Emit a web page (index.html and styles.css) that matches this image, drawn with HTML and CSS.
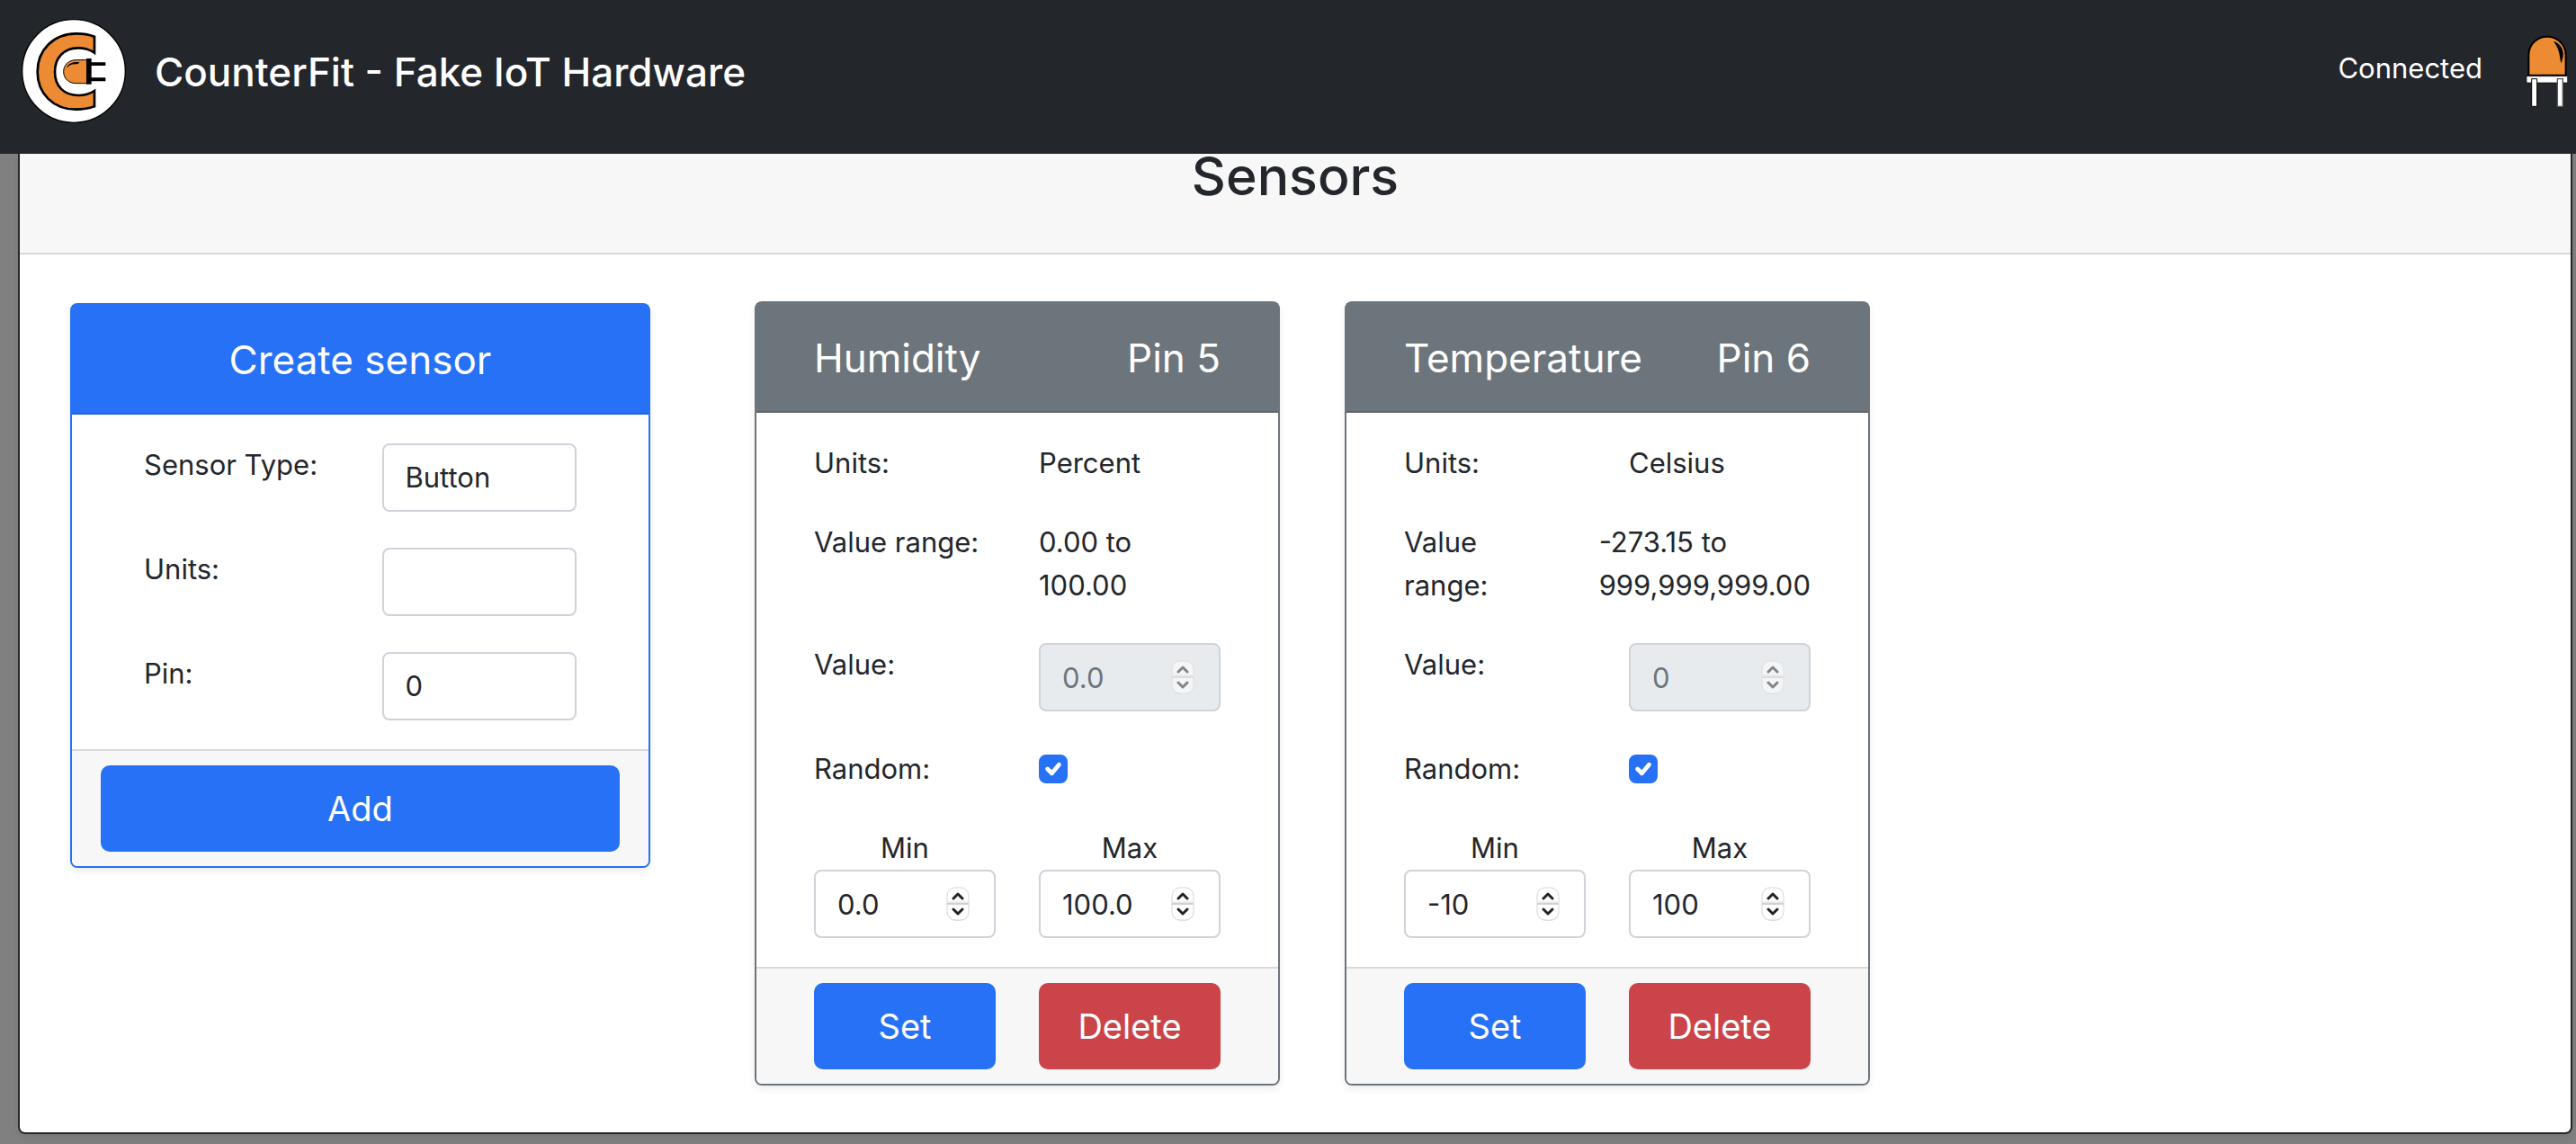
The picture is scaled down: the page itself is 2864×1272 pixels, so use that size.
FILE: index.html
```html
<!DOCTYPE html>
<html lang="en">
<head>
<meta charset="utf-8">
<title>CounterFit</title>
<link rel="stylesheet" href="styles.css">
</head>
<body>
<svg width="0" height="0" class="sprite" aria-hidden="true">
  <symbol id="stepper" viewBox="0 0 28 40">
    <rect x="2" y="3" width="24" height="36" rx="9" fill="#000" opacity=".08"/>
    <rect x="2" y="2" width="24" height="36" rx="9" fill="#fff" stroke="#d6d6d6"/>
    <path d="M3 17H25V21H3Z" fill="#ececec"/>
    <path d="M2 20H26" stroke="#d0d0d0" stroke-width="2"/>
    <path d="M9 14L14 9L19 14M9 26L14 31L19 26" fill="none" stroke="#222" stroke-width="3" stroke-linecap="round" stroke-linejoin="round"/>
  </symbol>
</svg>

<header class="navbar">
  <svg class="logo" viewBox="24 26 348 348" role="img" aria-label="CounterFit logo">
    <circle cx="198" cy="200" r="172" fill="#fff" stroke="#000" stroke-width="4"/>
    <path d="M267 85Q240 75 207 75C130 75 77 130 77 203C77 275 130 328 205 328Q240 328 267 318V266Q245 281 213 281C165 281 135 250 135 203C135 156 165 123 212 123Q245 123 267 139Z" fill="#ec8b33" stroke="#000" stroke-width="8"/>
    <path d="M242 163H207C180 163 164 180 164 202C164 224 180 241 207 241H242Z" fill="#ec8b33" stroke="#000" stroke-width="3"/>
    <path d="M174 190C180 175 195 168 217 171C215 176 210 177 202 177C190 177 183 181 174 190Z"/>
    <path d="M240 158H257V171H304V182H257V222H304V234H257V244H240Z"/>
  </svg>
  <h1 class="brand">CounterFit - Fake IoT Hardware</h1>
  <span class="status">Connected</span>
  <svg class="led" viewBox="54 26 144 240" role="img" aria-label="LED on">
    <path d="M64 160V93C64 55 95 31 126 31C157 31 188 55 188 93V160Z" fill="#ec8b33" stroke="#000" stroke-width="6"/>
    <path d="M147 47C166 50 183 74 179 97L173 120C166 102 171 78 147 47Z"/>
    <path d="M57 163H194V185H57Z" fill="#fff" stroke="#000" stroke-width="2"/>
    <path d="M74 172H92V264H74Z" fill="#fff" stroke="#000" stroke-width="3"/>
    <path d="M160 172H178V264H160Z" fill="#fff" stroke="#555" stroke-width="4"/>
  </svg>
</header>

<main class="panel">
  <h2 class="panel-title">Sensors</h2>
  <div class="panel-body">
    <form class="card card-create">
      <h3 class="card-header">Create sensor</h3>
      <div class="card-body">
        <div class="row">
          <label for="type">Sensor Type:</label>
          <select id="type" class="control"><option>Button</option></select>
        </div>
        <div class="row">
          <label for="units">Units:</label>
          <input id="units" class="control" type="text">
        </div>
        <div class="row">
          <label for="pin">Pin:</label>
          <select id="pin" class="control"><option>0</option></select>
        </div>
      </div>
      <div class="card-footer"><button type="button" class="btn btn-primary">Add</button></div>
    </form>

    <div class="sensors">
      <form class="card">
        <h3 class="card-header"><span>Humidity</span><span>Pin 5</span></h3>
        <div class="card-body">
          <div class="row"><span>Units:</span><span>Percent</span></div>
          <div class="row"><span>Value range:</span><span>0.00 to 100.00</span></div>
          <div class="row">
            <label for="h-value">Value:</label>
            <div class="number"><input id="h-value" class="control" type="number" step="0.1" value="0.0" disabled><svg class="stepper"><use href="#stepper"/></svg></div>
          </div>
          <div class="row">
            <label for="h-random">Random:</label>
            <div class="check"><input id="h-random" type="checkbox" checked><svg viewBox="0 0 20 20"><path d="M6 10L9 13L14 7"/></svg></div>
          </div>
          <div class="row">
            <div class="field"><label for="h-min">Min</label>
              <div class="number"><input id="h-min" class="control" type="number" step="0.1" value="0.0"><svg class="stepper"><use href="#stepper"/></svg></div></div>
            <div class="field"><label for="h-max">Max</label>
              <div class="number"><input id="h-max" class="control" type="number" step="0.1" value="100.0"><svg class="stepper"><use href="#stepper"/></svg></div></div>
          </div>
        </div>
        <div class="card-footer"><button type="button" class="btn btn-primary">Set</button><button type="button" class="btn btn-danger">Delete</button></div>
      </form>

      <form class="card">
        <h3 class="card-header"><span>Temperature</span><span>Pin 6</span></h3>
        <div class="card-body">
          <div class="row"><span>Units:</span><span>Celsius</span></div>
          <div class="row"><span>Value range:</span><span>-273.15 to 999,999,999.00</span></div>
          <div class="row">
            <label for="t-value">Value:</label>
            <div class="number"><input id="t-value" class="control" type="number" value="0" disabled><svg class="stepper"><use href="#stepper"/></svg></div>
          </div>
          <div class="row">
            <label for="t-random">Random:</label>
            <div class="check"><input id="t-random" type="checkbox" checked><svg viewBox="0 0 20 20"><path d="M6 10L9 13L14 7"/></svg></div>
          </div>
          <div class="row">
            <div class="field"><label for="t-min">Min</label>
              <div class="number"><input id="t-min" class="control" type="number" value="-10"><svg class="stepper"><use href="#stepper"/></svg></div></div>
            <div class="field"><label for="t-max">Max</label>
              <div class="number"><input id="t-max" class="control" type="number" value="100"><svg class="stepper"><use href="#stepper"/></svg></div></div>
          </div>
        </div>
        <div class="card-footer"><button type="button" class="btn btn-primary">Set</button><button type="button" class="btn btn-danger">Delete</button></div>
      </form>
    </div>
  </div>
</main>
</body>
</html>
```
FILE: styles.css
```css
:root {
  --blue: #2671f5;
  --gray: #6d757c;
  --red: #cb444a;
  --dark: #23262b;
}

* { box-sizing: border-box; }

body {
  margin: 0;
  background: #808080;
  color: var(--dark);
  font-family: Inter, "Liberation Sans", sans-serif;
  font-size: 31px;
  line-height: 48px;
}

h1, h2, h3 { margin: 0; }

.sprite { position: absolute; }

.navbar {
  display: flex;
  align-items: center;
  padding: 21px 8px 34px 24px;
  background: var(--dark);
  color: #fff;
}

.logo { width: 116px; height: 116px; }

.brand {
  margin-left: 32px;
  padding-top: 2px;
  font-size: 44px;
  font-weight: 500;
}

.status { margin-left: auto; padding-bottom: 6px; }

.led { width: 48px; height: 80px; margin-left: 48px; }

.panel {
  margin: 0 4px 11px 20px;
  background: #fff;
  border: 2px solid var(--dark);
  border-top: 0;
  border-radius: 0 0 8px 8px;
  box-shadow: 0 4px 8px rgba(0, 0, 0, .075);
}

.panel-title {
  padding-bottom: 60px;
  background: #f7f7f7;
  border-bottom: 2px solid #d9d9d9;
  font-size: 59px;
  font-weight: 500;
  line-height: 50px;
  text-align: center;
}

.panel-body {
  display: flex;
  align-items: flex-start;
  gap: 116px;
  padding: 52px 56px;
}

.sensors {
  display: flex;
  flex: 1;
  flex-wrap: wrap;
  gap: 72px;
}

.card {
  --accent: var(--gray);
  width: 584px;
  background: #fff;
  border: 2px solid var(--accent);
  border-radius: 8px;
  box-shadow: 0 4px 8px rgba(0, 0, 0, .075);
}

.card-create {
  --accent: var(--blue);
  width: 645px;
  margin-top: 2px;
}

.card-header {
  display: flex;
  justify-content: space-between;
  padding: 32px 64px 30px;
  background: var(--accent);
  border-bottom: 2px solid rgba(0, 0, 0, .125);
  color: #fff;
  font-size: 44px;
  font-weight: 400;
  line-height: 58px;
}

.card-create .card-header { justify-content: center; }

.card-body {
  display: flex;
  flex-direction: column;
  gap: 40px;
  padding: 32px 64px;
}

.card-create .card-body { padding: 32px 80px; }

.row { display: flex; gap: 48px; }

.row > * { flex: 1 1 0; }

.card-create .row { display: grid; grid-template-columns: 1fr 1fr; }

.control {
  display: block;
  width: 100%;
  min-width: 0;
  height: 76px;
  margin: 0;
  padding: 0 24px;
  background: #fff;
  border: 2px solid #ced4da;
  border-radius: 8px;
  color: inherit;
  font: inherit;
  appearance: none;
}

.control:disabled { background: #e8ebee; color: var(--gray); opacity: 1; }

.number { position: relative; }

.number .control { padding-right: 64px; appearance: textfield; }

.control::-webkit-inner-spin-button { appearance: none; margin: 0; }

.stepper {
  position: absolute;
  top: 18px;
  right: 28px;
  width: 28px;
  height: 40px;
  pointer-events: none;
}

.control:disabled + .stepper { opacity: .5; }

.check {
  display: grid;
  justify-content: start;
  align-content: center;
}

.check > * { grid-area: 1 / 1; }

.check input {
  width: 32px;
  height: 32px;
  margin: 0;
  border: 2px solid #bfbfbf;
  border-radius: 8px;
  appearance: none;
}

.check input:checked { background: var(--blue); border-color: var(--blue); }

.check svg {
  width: 32px;
  height: 32px;
  fill: none;
  stroke: #fff;
  stroke-width: 3;
  stroke-linecap: round;
  stroke-linejoin: round;
  pointer-events: none;
}

.field > label { display: block; text-align: center; }

.card-footer {
  display: flex;
  gap: 48px;
  padding: 16px 64px;
  background: #f7f7f7;
  border-top: 2px solid #d9d9d9;
  border-radius: 0 0 6px 6px;
}

.card-create .card-footer { padding: 16px 32px; }

.btn {
  flex: 1 1 0;
  height: 96px;
  padding: 0;
  border: 0;
  border-radius: 10px;
  color: #fff;
  font-family: inherit;
  font-size: 38px;
}

.btn-primary { background: var(--blue); }

.btn-danger { background: var(--red); }
```
